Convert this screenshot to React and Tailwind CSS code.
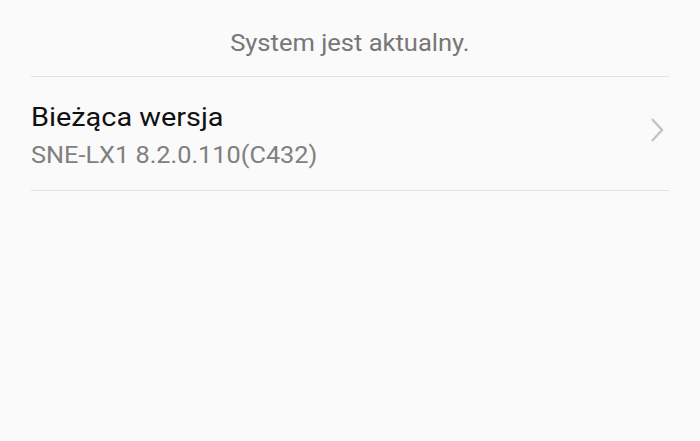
export default function App() {
    return (
        <div className="w-[700px] h-[441px] bg-[#fafafa] font-['Roboto',sans-serif] overflow-hidden">
            <div className="px-[31px]">
                <div className="pt-[29px] pb-[17px] flex justify-center border-b border-[#e2e2e2]">
                    <span className="inline-block text-[23px] leading-[30px] text-[#777] scale-x-[1.11]">System jest aktualny.</span>
                </div>
                <div className="pt-[23px] pb-[19px] flex items-center justify-between border-b border-[#e2e2e2]">
                    <div className="flex flex-col items-start">
                        <span className="inline-block origin-left scale-x-[1.11] text-[26px] leading-[34px] text-[#111]">Bieżąca wersja</span>
                        <span className="inline-block origin-left scale-x-[1.1] mt-[7px] text-[23px] leading-[30px] text-[#808080]">SNE-LX1 8.2.0.110(C432)</span>
                    </div>
                    <svg width="16" height="26" viewBox="0 0 16 26" className="mr-[4px] mb-[12px]">
                        <path d="M3 2 L13 13 L3 24" fill="none" stroke="#c4c4c4" strokeWidth="2.4" />
                    </svg>
                </div>
            </div>
        </div>
    );
}
